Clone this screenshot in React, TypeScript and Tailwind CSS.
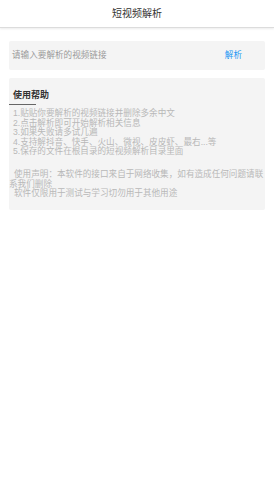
export default function App() {
  const tips = [
    '1.贴贴你要解析的视频链接并删除多余中文',
    '2.点击解析即可开始解析相关信息',
    '3.如果失败请多试几遍',
    '4.支持解抖音、快手、火山、微视、皮皮虾、最右...等',
    '5.保存的文件在根目录的短视频解析目录里面',
  ]

  return (
    <div
      className="min-h-[481px] w-[274px] bg-white"
      style={{ fontFamily: '"Liberation Sans", "Noto Sans CJK SC", sans-serif' }}
    >
      <header className="flex h-[28px] items-center justify-center border-b border-[#dcdcdc] shadow-[0_1px_2px_rgba(0,0,0,0.08)]">
        <h1 className="text-[10px] leading-none text-[#333]">短视频解析</h1>
      </header>

      <div className="mx-[9px] mt-[13px] flex h-[29px] items-center justify-between rounded-[2px] bg-[#f4f4f4] pl-[3px] pr-[23px]">
        <span className="text-[8.6px] text-[#9a9a9a]">请输入要解析的视频链接</span>
        <button type="button" className="text-[8.6px] text-[#2196f3]">
          解析
        </button>
      </div>

      <section className="mx-[9px] mt-[8px] h-[132px] rounded-[2px] bg-[#f4f4f4] pt-[11px]">
        <div className="pl-[4px] text-[9px] font-bold leading-[12px] text-[#333]">使用帮助</div>
        <div className="mt-[3px] h-px w-[27px] bg-[#666]" />
        <ul className="mt-[4px] pl-[4px] text-[8.6px] leading-[9.6px] text-[#b8b8b8]">
          {tips.map((t) => (
            <li key={t}>{t}</li>
          ))}
        </ul>
        <div className="mt-[13px] text-[8.6px] leading-[9.6px] text-[#b8b8b8]">
          <p className="indent-[5px]">使用声明：本软件的接口来自于网络收集，如有造成任何问题请联系我们删除</p>
          <p className="pl-[5px]">软件仅限用于测试与学习切勿用于其他用途</p>
        </div>
      </section>
    </div>
  )
}
